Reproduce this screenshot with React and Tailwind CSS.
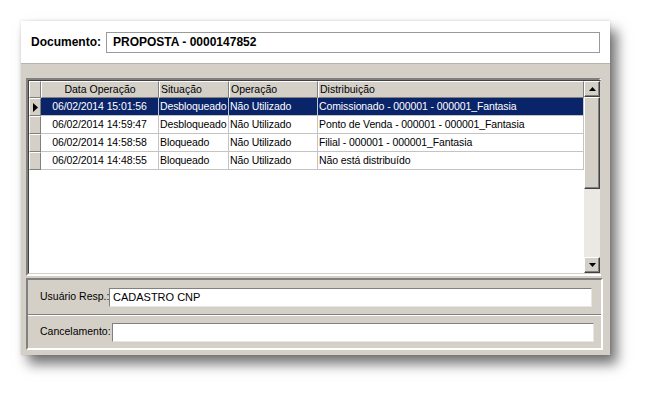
const rows = [
  { data: "06/02/2014 15:01:56", sit: "Desbloqueado", op: "Não Utilizado", dist: "Comissionado - 000001 - 000001_Fantasia", sel: true },
  { data: "06/02/2014 14:59:47", sit: "Desbloqueado", op: "Não Utilizado", dist: "Ponto de Venda - 000001 - 000001_Fantasia" },
  { data: "06/02/2014 14:58:58", sit: "Bloqueado", op: "Não Utilizado", dist: "Filial - 000001 - 000001_Fantasia" },
  { data: "06/02/2014 14:48:55", sit: "Bloqueado", op: "Não Utilizado", dist: "Não está distribuído" },
];

const font = { fontFamily: '"Liberation Sans", Arial, sans-serif' };

function HeaderCell({ w, children, center }) {
  return (
    <div
      className={`${w} h-full shrink-0 whitespace-nowrap border-t border-l border-t-white border-l-white border-r border-b border-r-[#808080] border-b-[#808080] bg-[#d4d0c8] px-[1px] leading-[15px] ${center ? "text-center" : ""}`}
    >
      {children}
    </div>
  );
}

function Cell({ w, children, center, sel }) {
  return (
    <div
      className={`${w} h-full shrink-0 overflow-hidden whitespace-nowrap border-r border-b border-[#c4c4c4] px-[1px] leading-[17px] tracking-[-0.1px] ${center ? "text-center" : ""} ${sel ? "bg-[#0a246a] text-white" : "text-black"}`}
    >
      {children}
    </div>
  );
}

function ScrollButton({ down }) {
  return (
    <div className="flex h-[16px] w-[16px] items-center justify-center border border-t-white border-l-white border-r-[#404040] border-b-[#404040] bg-[#d4d0c8] shadow-[inset_-1px_-1px_0_#808080]">
      <svg width="7" height="4" viewBox="0 0 7 4">
        {down ? <polygon points="0,0 7,0 3.5,4" fill="#000" /> : <polygon points="0,4 7,4 3.5,0" fill="#000" />}
      </svg>
    </div>
  );
}

export default function App() {
  return (
    <div className="h-[398px] w-[652px] bg-white pl-[21px] pt-[21px]" style={font}>
      <div className="flex h-[334px] w-[589px] flex-col bg-white shadow-[7px_9px_12px_rgba(0,0,0,0.55),0_0_3px_rgba(0,0,0,0.15)]">
        <div className="flex h-[42px] shrink-0 items-center pl-[10px]">
          <span className="w-[75px] shrink-0 whitespace-nowrap text-[12px] font-bold text-black">Documento:</span>
          <div className="flex h-[21px] w-[494px] items-center border border-[#9a9a9a] pl-[6px] text-[12px] font-bold text-black">
            PROPOSTA - 0000147852
          </div>
        </div>

        <div className="flex flex-1 flex-col border-t border-[#b8b4ac] bg-[#d4d0c8] pl-[5px] pt-[14px]">
          <div className="flex h-[198px] w-[575px] border-2 border-t-[#808080] border-l-[#808080] border-r-white border-b-white bg-white text-[10.5px]">
            <div className="flex flex-1 flex-col border border-t-[#404040] border-l-[#404040] border-r-[#d4d0c8] border-b-[#d4d0c8]">
              <div className="flex flex-1">
                <div className="flex flex-1 flex-col">
                  <div className="flex h-[17px] shrink-0">
                    <HeaderCell w="w-[12px]" />
                    <HeaderCell w="w-[118px]" center>Data Operação</HeaderCell>
                    <HeaderCell w="w-[70px]">Situação</HeaderCell>
                    <HeaderCell w="w-[89px]">Operação</HeaderCell>
                    <HeaderCell w="w-[266px]">Distribuição</HeaderCell>
                  </div>
                  {rows.map((r) => (
                    <div key={r.data} className="flex h-[18px] shrink-0">
                      <div className="flex h-full w-[12px] shrink-0 items-center justify-center border-t border-l border-t-white border-l-white border-r border-b border-r-[#808080] border-b-[#808080] bg-[#d4d0c8]">
                        {r.sel && (
                          <svg width="5" height="9" viewBox="0 0 5 9">
                            <polygon points="0,0 5,4.5 0,9" fill="#000" />
                          </svg>
                        )}
                      </div>
                      <Cell w="w-[118px]" center sel={r.sel}>{r.data}</Cell>
                      <Cell w="w-[70px]" sel={r.sel}>{r.sit}</Cell>
                      <Cell w="w-[89px]" sel={r.sel}>{r.op}</Cell>
                      <Cell w="w-[266px]" sel={r.sel}>{r.dist}</Cell>
                    </div>
                  ))}
                </div>
                <div className="flex w-[16px] shrink-0 flex-col bg-[#ebe9e3]">
                  <ScrollButton />
                  <div className="h-[92px] border border-t-white border-l-white border-r-[#404040] border-b-[#404040] bg-[#d4d0c8] shadow-[inset_-1px_-1px_0_#808080]" />
                  <div className="flex-1" />
                  <ScrollButton down />
                </div>
              </div>
            </div>
          </div>

          <div className="mt-[2px] flex h-[72px] w-[577px] flex-col border-2 border-t-[#808080] border-l-[#808080] border-r-white border-b-white text-[10.5px] text-black">
            <div className="flex h-[35px] items-center border-b border-[#808080] pl-[12px]">
              <span className="w-[69px] shrink-0 whitespace-nowrap">Usuário Resp.:</span>
              <div className="flex h-[19px] w-[483px] items-center border border-t-[#808080] border-l-[#808080] border-r-[#e8e6e0] border-b-[#e8e6e0] bg-white pl-[3px] text-[11px]">
                CADASTRO CNP
              </div>
            </div>
            <div className="flex flex-1 items-center border-t border-white pl-[12px]">
              <span className="w-[72px] shrink-0 whitespace-nowrap">Cancelamento:</span>
              <div className="h-[19px] w-[482px] border border-t-[#808080] border-l-[#808080] border-r-[#e8e6e0] border-b-[#e8e6e0] bg-white" />
            </div>
          </div>
        </div>
      </div>
    </div>
  );
}
